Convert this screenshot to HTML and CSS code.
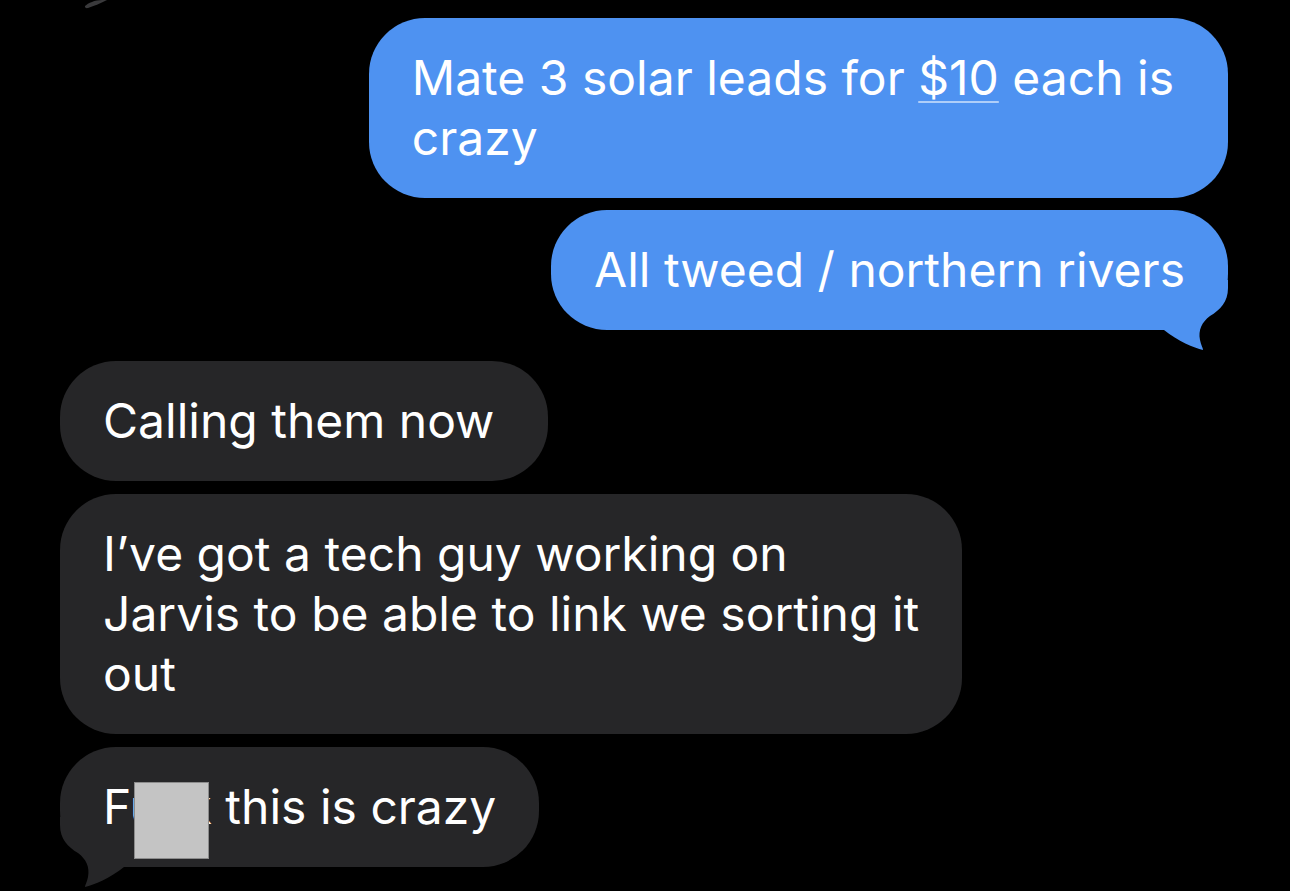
FILE: index.html
```html
<!DOCTYPE html>
<html>
<head>
<meta charset="utf-8">
<link rel="stylesheet" href="styles.css">
</head>
<body>
<div class="thread">
  <svg class="prev-tail" width="120" height="10" viewBox="0 0 120 10"><path d="M85,6 C88,3 95,0 102,0 L107,0 C101,3 94,6 88,8 C86,8.5 84.5,7.5 85,6 Z" fill="#3a3a3c"/></svg>

  <div class="row out">
    <div class="bubble blue roomy"><span class="text">Mate 3 solar leads for <span class="link">$10</span> each is<br>crazy</span></div>
  </div>
  <div class="row out last">
    <div class="bubble blue">
      <svg class="tail tail-right" width="64" height="72" viewBox="0 0 64 72"><path d="M64,0 L64,8 C64,22 56,30 46,36 C38,42 34,50 36,60 C37,65 39,68 39,70 C30,68 14,61 0,50 L0,0 Z" fill="#4e92f1"/></svg>
      <span class="text">All tweed / northern rivers</span>
    </div>
  </div>

  <div class="row in">
    <div class="bubble grey roomy"><span class="text">Calling them now</span></div>
  </div>
  <div class="row in">
    <div class="bubble grey"><span class="text">I’ve got a tech guy working on<br>Jarvis to be able to link we sorting it<br>out</span></div>
  </div>
  <div class="row in">
    <div class="bubble grey">
      <svg class="tail tail-left" width="64" height="72" viewBox="0 0 64 72"><path d="M64,0 L64,8 C64,22 56,30 46,36 C38,42 34,50 36,60 C37,65 39,68 39,70 C30,68 14,61 0,50 L0,0 Z" fill="#262628"/></svg>
      <span class="text">Fuck this is crazy</span>
      <div class="censor"></div>
    </div>
  </div>
</div>
</body>
</html>
```
FILE: styles.css
```css
html, body {
  margin: 0;
  padding: 0;
  background: #000;
}
body {
  width: 1290px;
  height: 891px;
  overflow: hidden;
  font-family: Inter, "Noto Sans", "Liberation Sans", sans-serif;
}
.thread {
  position: relative;
  display: flex;
  flex-direction: column;
  padding: 18px 62px 0 60px;
}
.prev-tail {
  position: absolute;
  left: 0;
  top: 0;
}
.row {
  display: flex;
  margin-bottom: 12px;
}
.row.out {
  justify-content: flex-end;
}
.row.out.last {
  margin-bottom: 31px;
}
.row.in {
  justify-content: flex-start;
  margin-bottom: 13px;
}
.bubble {
  position: relative;
  box-sizing: border-box;
  max-width: 1000px;
  padding: 30px 43px;
  border-radius: 56px;
  font-size: 48px;
  line-height: 60px;
  letter-spacing: 0;
  color: #fff;
}
.bubble.roomy {
  padding-right: 54px;
}
.bubble.blue {
  background: #4e92f1;
}
.bubble.grey {
  background: #262628;
}
.text {
  position: relative;
  z-index: 1;
}
.link {
  text-decoration: underline;
  text-decoration-color: rgba(255, 255, 255, 0.55);
  text-decoration-thickness: 2px;
  text-underline-offset: 6px;
}
.tail {
  position: absolute;
  bottom: -22px;
}
.tail-right {
  right: 0;
}
.tail-left {
  left: 0;
  transform: scaleX(-1);
}
.censor {
  position: absolute;
  z-index: 2;
  left: 74px;
  top: 35px;
  width: 75px;
  height: 77px;
  box-sizing: border-box;
  background: #c4c4c4;
  border: 1px solid #8c8c8c;
}
```
